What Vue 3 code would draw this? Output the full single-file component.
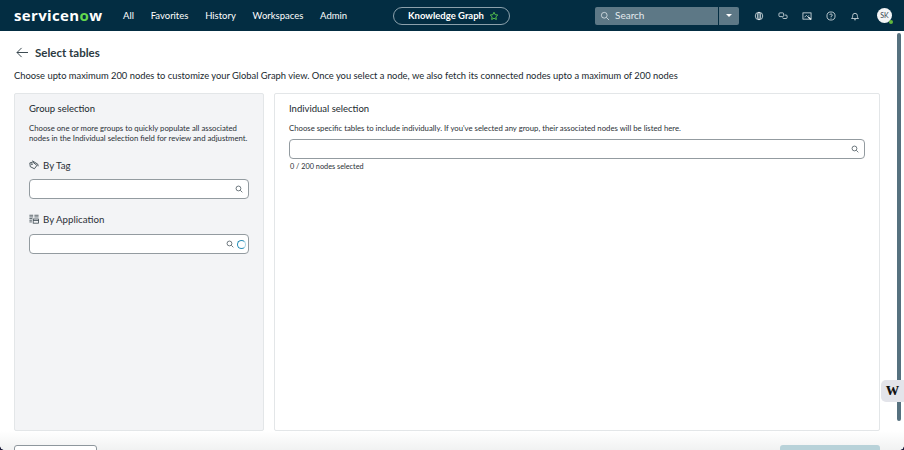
<template>
  <div class="page">
    <header class="topbar">
      <div class="logo">servicen<span class="logo-o">o</span>w</div>
      <nav class="nav">
        <span v-for="item in navItems" :key="item" class="nav-item">{{ item }}</span>
      </nav>
      <div class="pill">
        <span>Knowledge Graph</span>
        <svg class="pill-star" viewBox="0 0 24 24" fill="none" stroke="#62d84e" stroke-width="2">
          <path d="M12 3l2.8 5.8 6.2.9-4.5 4.4 1.1 6.3L12 17.4l-5.6 3 1.1-6.3L3 9.7l6.2-.9z" />
        </svg>
      </div>
      <div class="search">
        <div class="search-main">
          <svg class="search-ico" viewBox="0 0 16 16" fill="none" stroke="#e4ebef" stroke-width="1.2">
            <circle cx="6.8" cy="6.8" r="4.6" />
            <path d="M10.3 10.3L14.5 14.5" />
          </svg>
          <span class="search-text">Search</span>
        </div>
        <div class="search-drop"><i class="caret"></i></div>
      </div>
      <div class="icons">
        <svg viewBox="0 0 16 16" fill="none" stroke="#eef3f5" stroke-width="1.2">
          <circle cx="8" cy="8" r="6" />
          <ellipse cx="8" cy="8" rx="2.6" ry="6" />
          <path d="M8 2v12" />
        </svg>
        <svg viewBox="0 0 16 16" fill="none" stroke="#eef3f5" stroke-width="1.2">
          <rect x="1.5" y="3" width="7.5" height="6" rx="1.5" />
          <path d="M10.5 6.5H13a1.5 1.5 0 0 1 1.5 1.500v2.500A1.500 1.500 0 0 1 13 12H9a1.500 1.500 0 0 1-1.500-1.500" />
        </svg>
        <svg viewBox="0 0 16 16" fill="none" stroke="#eef3f5" stroke-width="1.2">
          <rect x="1.5" y="3" width="13" height="10" />
          <path d="M4 10l3-3 2 2 2-2" />
          <path d="M10 9.5l4.5 4" stroke-width="2" />
        </svg>
        <svg viewBox="0 0 16 16" fill="none" stroke="#eef3f5" stroke-width="1.2">
          <circle cx="8" cy="8" r="6.5" />
          <path d="M6 6.2A2 2 0 1 1 8 8.6V10" />
          <path d="M8 11v1.2" />
        </svg>
        <svg viewBox="0 0 16 16" fill="none" stroke="#eef3f5" stroke-width="1.2">
          <path d="M2.5 12h11c-1.3-1-1.700-2.200-1.700-4.500a3.800 3.800 0 0 0-7.600 0c0 2.300-.4 3.500-1.700 4.500z" />
          <path d="M6.5 14h3" />
        </svg>
      </div>
      <div class="avatar">SK<i class="status"></i></div>
    </header>

    <main class="content">
      <div class="title-row">
        <svg class="back" viewBox="0 0 14 12" fill="none" stroke="#2b3a42" stroke-width="1">
          <path d="M13 6H1M6 1L1 6l5 5" />
        </svg>
        <h1>Select tables</h1>
      </div>
      <p class="intro">
        Choose upto maximum 200 nodes to customize your Global Graph view. Once you select a node, we also fetch its connected nodes upto a maximum of 200 nodes
      </p>

      <div class="panels">
        <section class="panel group">
          <h2>Group selection</h2>
          <p class="hint">
            Choose one or more groups to quickly populate all associated<br />nodes in the Individual selection field for review and adjustment.
          </p>
          <div class="label label-tag">
            <svg viewBox="0 0 12 12" fill="none" stroke="#2b3a42" stroke-width="1">
              <path d="M1 3.5l3.500-1 5 4-3 4-5-2.500z" />
              <path d="M4 1l6.500 4 .5 2.500" />
              <circle cx="3.5" cy="5" r=".6" />
            </svg>
            <span>By Tag</span>
          </div>
          <div class="field">
            <svg class="mag" viewBox="0 0 12 12" fill="none" stroke="#2b3a42" stroke-width="1">
              <circle cx="5.2" cy="5.2" r="3.6" />
              <path d="M8 8l3 3" />
            </svg>
          </div>
          <div class="label label-app">
            <svg viewBox="0 0 12 12" fill="none" stroke="#2b3a42" stroke-width="0.9">
              <path d="M.5 1.5H5M.5 3.500H5M.5 5.500H4M.5 7.500h3M.5 9.500h3M6.500 1.500h5M6.500 3.500h5" />
              <rect x="5" y="6" width="6.5" height="5" />
              <path d="M5 7.8h6.500" />
            </svg>
            <span>By Application</span>
          </div>
          <div class="field field-app">
            <svg class="mag mag-left" viewBox="0 0 12 12" fill="none" stroke="#2b3a42" stroke-width="1">
              <circle cx="5.2" cy="5.2" r="3.6" />
              <path d="M8 8l3 3" />
            </svg>
            <i class="spinner"></i>
          </div>
        </section>

        <section class="panel single">
          <h2>Individual selection</h2>
          <p class="hint">
            Choose specific tables to include individually. If you've selected any group, their associated nodes will be listed here.
          </p>
          <div class="field field-wide">
            <svg class="mag" viewBox="0 0 12 12" fill="none" stroke="#2b3a42" stroke-width="1">
              <circle cx="5.2" cy="5.2" r="3.6" />
              <path d="M8 8l3 3" />
            </svg>
          </div>
          <div class="count">{{ selected }} / {{ maxNodes }} nodes selected</div>
        </section>
      </div>
    </main>

    <footer class="footer">
      <div class="btn-outline"></div>
      <div class="btn-filled"></div>
    </footer>

    <div class="scrollbar"></div>
    <div class="widget">w</div>
  </div>
</template>

<script setup>
const navItems = ["All", "Favorites", "History", "Workspaces", "Admin"];
const selected = 0;
const maxNodes = 200;
</script>

<style>
html,
body {
  margin: 0;
  background: #fff;
  overflow: hidden;
}
</style>

<style scoped>
.page {
  position: relative;
  width: 904px;
  height: 450px;
  overflow: hidden;
  display: flex;
  flex-direction: column;
  font-family: Lato, "Liberation Sans", sans-serif;
  color: #20282e;
  background: #fff;
}

/* rounded window corners from the capture */
.page::before,
.page::after {
  content: "";
  position: absolute;
  bottom: 0;
  width: 4px;
  height: 4px;
  z-index: 2;
}

.page::before {
  left: 0;
  background: radial-gradient(circle at 100% 0, transparent 3.5px, #1c1c3a 4px);
}

.page::after {
  right: 0;
  background: radial-gradient(circle at 0 0, transparent 3.5px, #1c1c3a 4px);
}

.topbar {
  height: 31px;
  flex-shrink: 0;
  display: flex;
  align-items: center;
  background: #032d42;
  color: #fff;
}

.logo {
  margin-left: 14px;
  width: 109px;
  font-family: "Open Sans", "Liberation Sans", sans-serif;
  font-size: 15px;
  font-weight: 700;
  letter-spacing: 0.35px;
  line-height: 31px;
}

.logo-o {
  color: #62d84e;
}

.nav {
  display: flex;
  gap: 16.75px;
  width: 270px;
  font-size: 9.5px;
}

.pill {
  width: 117px;
  height: 18px;
  box-sizing: border-box;
  border: 1px solid #8ca1ac;
  border-radius: 9px;
  padding-left: 4px;
  display: flex;
  align-items: center;
  justify-content: center;
  gap: 5px;
  font-size: 9.5px;
  font-weight: 700;
}

.pill-star {
  width: 10px;
  height: 10px;
}

.search {
  margin-left: 85px;
  width: 144px;
  height: 18px;
  display: flex;
  border-radius: 2px;
  overflow: hidden;
  background: #5d7886;
  font-size: 10px;
  color: #e4ebef;
}

.search-main {
  flex: 1;
  display: flex;
  align-items: center;
  gap: 5px;
  padding-left: 5px;
  border-right: 1px solid #032d42;
}

.search-ico {
  width: 10px;
  height: 10px;
}

.search-text {
  margin-top: -1px;
}

.search-drop {
  width: 20px;
  display: flex;
  align-items: center;
  justify-content: center;
}

.caret {
  width: 0;
  height: 0;
  border-left: 3px solid transparent;
  border-right: 3px solid transparent;
  border-top: 3px solid #fff;
}

.icons {
  margin-left: 15px;
  display: flex;
  gap: 14px;
  align-items: center;
}

.icons svg {
  width: 10px;
  height: 10px;
}

.avatar {
  position: relative;
  margin-left: 17px;
  width: 15px;
  height: 15px;
  border-radius: 50%;
  background: #f3f5f6;
  color: #33434c;
  font-size: 7px;
  line-height: 15px;
  text-align: center;
}

.status {
  position: absolute;
  right: -1px;
  bottom: -1px;
  width: 4px;
  height: 4px;
  border-radius: 50%;
  background: #62b83c;
}

.content {
  flex: 1;
  min-height: 0;
  display: flex;
  flex-direction: column;
  padding: 0 24px 0 14px;
}

.title-row {
  margin-top: 14px;
  height: 14px;
  display: flex;
  align-items: center;
  gap: 6px;
  padding-left: 2px;
}

.back {
  width: 13px;
  height: 11px;
}

h1 {
  margin: 0;
  font-size: 11.5px;
  font-weight: 700;
  color: #2b3a42;
}

.intro {
  margin: 10px 0 0;
  height: 13px;
  font-size: 9.35px;
  line-height: 13px;
  white-space: nowrap;
}

.panels {
  margin-top: 11px;
  height: 338px;
  display: flex;
  gap: 10px;
}

.panel {
  box-sizing: border-box;
  border: 1px solid #e3e6e8;
  border-radius: 2px;
  padding: 9px 14px;
}

.group {
  width: 250px;
  background: #f3f4f6;
}

.single {
  flex: 1;
  background: #fff;
}

h2 {
  margin: 0;
  font-size: 9.5px;
  line-height: 12px;
  font-weight: 400;
}

.hint {
  margin: 8px 0 0;
  font-size: 7.75px;
  line-height: 10px;
  color: #2a3036;
  white-space: nowrap;
}

.label {
  display: flex;
  align-items: center;
  gap: 4px;
  font-size: 9.7px;
  line-height: 12px;
  color: #2a3036;
}

.label svg {
  width: 10px;
  height: 10px;
}

.label-tag {
  margin-top: 16px;
}

.label-app {
  margin-top: 14px;
}

.field {
  margin-top: 8px;
  height: 20px;
  box-sizing: border-box;
  border: 1px solid #939ba0;
  border-radius: 4px;
  background: #fff;
  display: flex;
  align-items: center;
  justify-content: flex-end;
  padding-right: 5px;
}

.field-app {
  margin-top: 9px;
  padding-right: 2px;
}

.field-wide {
  margin-top: 6px;
}

.mag {
  width: 8px;
  height: 8px;
}

.mag-left {
  margin-right: 3px;
}

.spinner {
  width: 9px;
  height: 9px;
  box-sizing: border-box;
  border: 1.2px solid #2a8fb8;
  border-right-color: #a8d4e4;
  border-radius: 50%;
}

.count {
  margin-top: 3px;
  padding-left: 1px;
  font-size: 7.3px;
  line-height: 9px;
  color: #2a3036;
}

.footer {
  position: relative;
  height: 19px;
  flex-shrink: 0;
  display: flex;
  justify-content: space-between;
  align-items: flex-start;
  padding: 14px 24px 0 14px;
  box-sizing: border-box;
  background: linear-gradient(#fff, #f1f2f2);
}

.btn-outline {
  width: 83px;
  height: 12px;
  box-sizing: border-box;
  border: 1px solid #8e979d;
  border-radius: 3px;
  background: #fff;
}

.btn-filled {
  width: 100px;
  height: 12px;
  border-radius: 3px;
  background: #b8d2d9;
}

.scrollbar {
  position: absolute;
  top: 33px;
  right: 3px;
  width: 4px;
  height: 388px;
  border-radius: 2px;
  background: #56717f;
}

.widget {
  position: absolute;
  top: 380px;
  right: 0;
  width: 23px;
  height: 22px;
  border-radius: 5px 0 0 5px;
  background: #e3e4ea;
  color: #111;
  font-family: "Liberation Serif", serif;
  font-weight: 700;
  font-size: 18px;
  line-height: 19px;
  text-align: center;
}
</style>
